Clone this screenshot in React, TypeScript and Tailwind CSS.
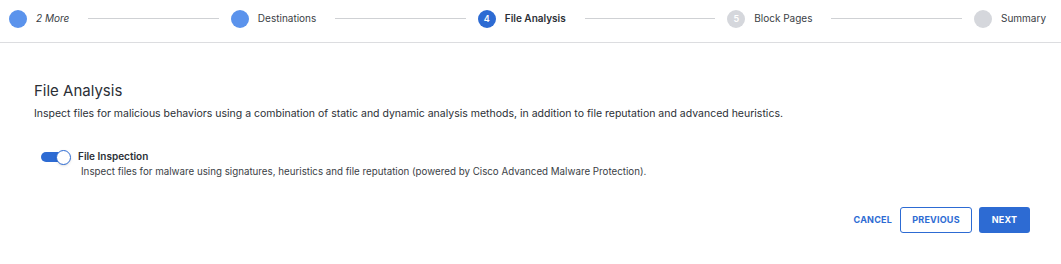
const font = { fontFamily: "Inter, 'Noto Sans', sans-serif" };

function Step({
  label,
  num,
  state,
}: {
  label: string;
  num?: string;
  state: "done" | "active" | "todo";
}) {
  const circle =
    state === "done"
      ? "bg-[#5b93ec]"
      : state === "active"
      ? "bg-[#2d6bd3] text-white"
      : "bg-[#d5d7dc] text-white";
  return (
    <div className="flex items-center shrink-0">
      <div
        className={`w-[18px] h-[18px] rounded-full flex items-center justify-center text-[9px] font-semibold ${circle}`}
      >
        {num}
      </div>
      <span
        className={`ml-[9px] text-[10px] ${
          state === "active" ? "font-semibold text-[#2b2f36]" : "text-[#3a3e45]"
        } ${label === "2 More" ? "italic" : ""}`}
      >
        {label}
      </span>
    </div>
  );
}

function Line() {
  return <div className="flex-1 h-px bg-[#cfd1d4] ml-[19px] mr-[12px]" />;
}

export default function App() {
  return (
    <div className="w-[1061px] h-[264px] bg-white" style={font}>
      <div className="h-[43px] flex items-center pl-[9px] pr-[15px] border-b border-[#dcdde0] pb-[5px]">
        <Step label="2 More" state="done" />
        <Line />
        <Step label="Destinations" state="done" />
        <Line />
        <Step label="File Analysis" num="4" state="active" />
        <Line />
        <Step label="Block Pages" num="5" state="todo" />
        <Line />
        <Step label="Summary" state="todo" />
      </div>

      <div className="pl-[34px] pr-[31px] pt-[38px]">
        <h2 className="text-[15px] leading-[20px] text-[#2b2f36]">File Analysis</h2>
        <p className="mt-[6px] text-[10.5px] leading-[14px] text-[#2b2f36]">
          Inspect files for malicious behaviors using a combination of static and dynamic
          analysis methods, in addition to file reputation and advanced heuristics.
        </p>

        <div className="mt-[28px] ml-[7px] flex items-start">
          <div className="relative w-[30px] h-[14px] mt-px">
            <div className="absolute left-0 top-[2px] w-[24px] h-[10px] rounded-full bg-[#2d6bd3]" />
            <div className="absolute left-[15px] top-0 w-[15px] h-[15px] rounded-full bg-white border-[1.5px] border-[#2d6bd3] shadow" />
          </div>
          <div className="ml-[7px]">
            <div className="text-[10px] leading-[14px] font-semibold text-[#2b2f36]">
              File Inspection
            </div>
            <div className="ml-[3px] mt-[2px] text-[9.75px] leading-[14px] text-[#3a3e45]">
              Inspect files for malware using signatures, heuristics and file reputation
              (powered by Cisco Advanced Malware Protection).
            </div>
          </div>
        </div>

        <div className="mt-[28px] flex justify-end items-center">
          <button className="text-[9px] font-bold text-[#2d6bd3] tracking-[0.2px] mr-[8px]">
            CANCEL
          </button>
          <button className="w-[72px] h-[26px] rounded-[3px] border border-[#2d6bd3] text-[9px] font-bold text-[#2d6bd3] tracking-[0.2px]">
            PREVIOUS
          </button>
          <button className="ml-[7px] w-[51px] h-[26px] rounded-[3px] bg-[#2d6bd3] text-[9px] font-bold text-white tracking-[0.2px]">
            NEXT
          </button>
        </div>
      </div>
    </div>
  );
}
